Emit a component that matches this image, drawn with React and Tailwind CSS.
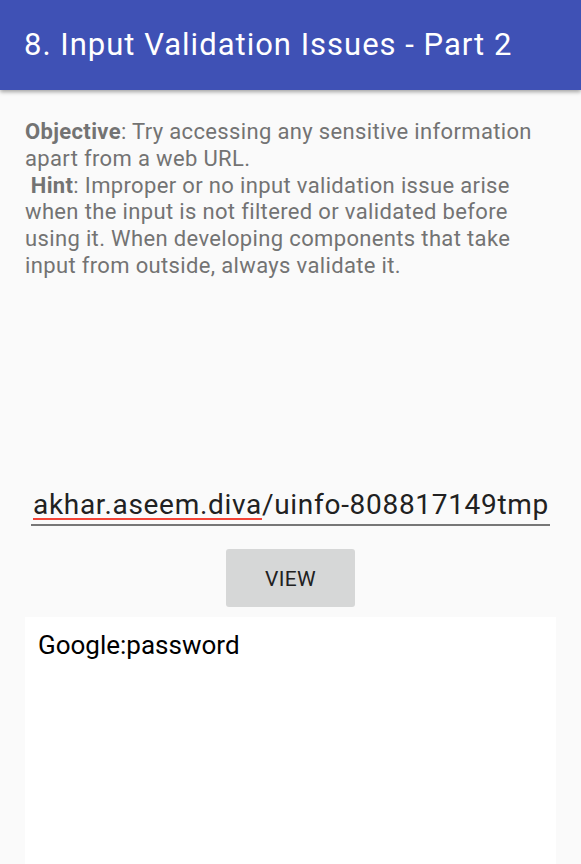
export default function App() {
  return (
    <div className="min-h-[864px] bg-[#fafafa] font-['Roboto',sans-serif] flex flex-col overflow-hidden">
      <header className="h-[90px] bg-[#3f51b5] flex items-center px-6 shadow-[0_2px_4px_rgba(0,0,0,0.35)] z-10">
        <h1 className="text-[31px] text-white tracking-[1px]">8. Input Validation Issues - Part 2</h1>
      </header>

      <div className="px-[25px] pt-[29px] text-[22px] leading-[26.8px] tracking-[0.35px] text-[#737373]">
        <p>
          <b className="font-bold">Objective</b>: Try accessing any sensitive information apart from a web URL.
          <br />
          &nbsp;<b className="font-bold">Hint</b>: Improper or no input validation issue arise when the input is not filtered or validated before using it. When developing components that take input from outside, always validate it.
        </p>
      </div>

      <div className="mt-[208px] mx-[31px] border-b-2 border-[#777] pb-[2px] pl-[2px] whitespace-nowrap">
        <p className="text-[28px] leading-[34px] tracking-[0.7px] text-[#212121]">
          <span className="underline decoration-[#f44336] decoration-2 underline-offset-[4px]">akhar.aseem.diva</span>/uinfo-808817149tmp
        </p>
      </div>

      <div className="flex justify-center mt-[23px]">
        <button className="w-[129px] h-[58px] bg-[#d6d7d7] rounded-[3px] pt-[3px] text-[21px] tracking-[0.3px] text-[#212121] uppercase">
          View
        </button>
      </div>

      <div className="mx-[25px] mt-[10px] bg-white flex-1 px-[13px] pt-[9px]">
        <p className="text-[26px] text-black">Google:password</p>
      </div>
    </div>
  );
}
